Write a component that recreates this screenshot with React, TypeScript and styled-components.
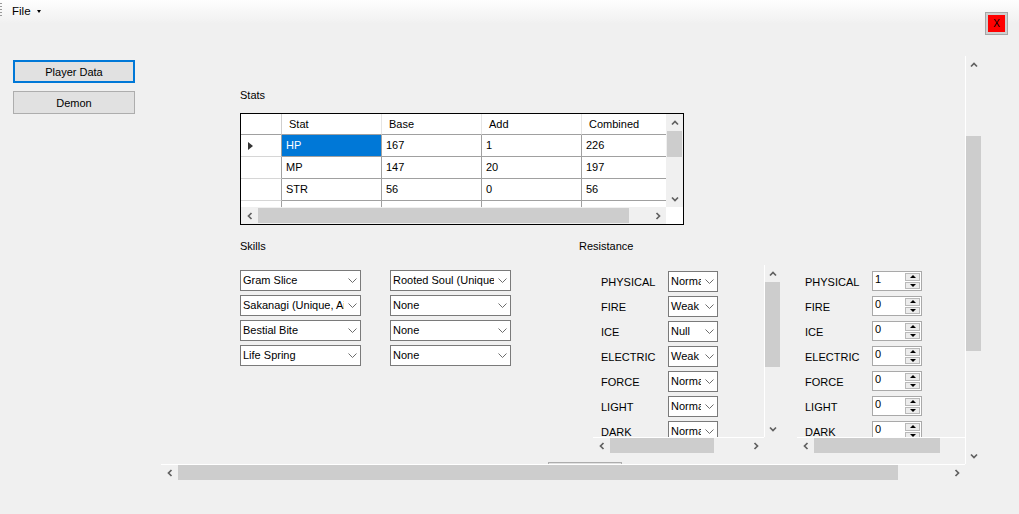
import styled, { createGlobalStyle } from "styled-components"

type Dir = 'up' | 'down' | 'left' | 'right'
type Thumb = { offset: number; size: number }

const stats = [
  { stat: 'HP', base: 167, add: 1, combined: 226 },
  { stat: 'MP', base: 147, add: 20, combined: 197 },
  { stat: 'STR', base: 56, add: 0, combined: 56 },
]

const skills = [
  'Gram Slice', 'Rooted Soul (Unique)',
  'Sakanagi (Unique, Ailment)', 'None',
  'Bestial Bite', 'None',
  'Life Spring', 'None',
]

const resistances = [
  { name: 'PHYSICAL', kind: 'Normal', value: 1 },
  { name: 'FIRE', kind: 'Weak', value: 0 },
  { name: 'ICE', kind: 'Null', value: 0 },
  { name: 'ELECTRIC', kind: 'Weak', value: 0 },
  { name: 'FORCE', kind: 'Normal', value: 0 },
  { name: 'LIGHT', kind: 'Normal', value: 0 },
  { name: 'DARK', kind: 'Normal', value: 0 },
]

const chevronPoints: Record<Dir, string> = {
  up: '1,5.5 4,2.5 7,5.5',
  down: '1,2.5 4,5.5 7,2.5',
  left: '5.5,1 2.5,4 5.5,7',
  right: '2.5,1 5.5,4 2.5,7',
}

const Chevron = ({ dir }: { dir: Dir }) => (
  <svg width="8" height="8" viewBox="0 0 8 8">
    <polyline points={chevronPoints[dir]} fill="none" stroke="#606060" strokeWidth="1.7" />
  </svg>
)

const DropArrow = () => (
  <svg width="9" height="5" viewBox="0 0 9 5">
    <polyline points="0.5,0.5 4.5,4.5 8.5,0.5" fill="none" stroke="#6d6d6d" strokeWidth="1" />
  </svg>
)

const ScrollPane = ({ width, height, v, h, edge, children }: {
  width: number, height: number, v: Thumb, h: Thumb, edge?: boolean, children: React.ReactNode
}) => (
  <Pane $w={width} $h={height}>
    <PaneView>{children}</PaneView>
    <VBar $edge={edge}>
      <VButton><Chevron dir="up" /></VButton>
      <VTrack $offset={v.offset}><VThumb $size={v.size} /></VTrack>
      <VButton><Chevron dir="down" /></VButton>
    </VBar>
    <HBar $edge={edge}>
      <HButton><Chevron dir="left" /></HButton>
      <HTrack $offset={h.offset}><HThumb $size={h.size} /></HTrack>
      <HButton><Chevron dir="right" /></HButton>
    </HBar>
    <div />
  </Pane>
)

const Combo = ({ value, width }: { value: string, width: number }) => (
  <ComboBox $w={width}>
    <ComboText>{value}</ComboText>
    <ComboButton><DropArrow /></ComboButton>
  </ComboBox>
)

const NumericUpDown = ({ value }: { value: number }) => (
  <Numeric>
    <NumericText>{value}</NumericText>
    <Spinner>
      <SpinButton><SpinTriangle $up /></SpinButton>
      <SpinButton><SpinTriangle /></SpinButton>
    </Spinner>
  </Numeric>
)

const App = () => {
  return (
    <Window>
      <GlobalStyle />
      <MenuStrip>
        <Grip />
        <MenuItem>File <Caret /></MenuItem>
        <CloseButton>X</CloseButton>
      </MenuStrip>

      <Body>
        <Sidebar>
          <NavButton $active>Player Data</NavButton>
          <NavButton>Demon</NavButton>
        </Sidebar>

        <MainFrame>
          <ScrollPane width={821} height={425} edge v={{ offset: 63, size: 215 }} h={{ offset: 0, size: 720 }}>
            <Content>
              <SectionLabel>Stats</SectionLabel>
              <GridBox>
                <ScrollPane width={442} height={110} v={{ offset: 0, size: 26 }} h={{ offset: 0, size: 371 }}>
                  <Table>
                    <Row $header>
                      <RowHead $header />
                      <HeadCell>Stat</HeadCell>
                      <HeadCell>Base</HeadCell>
                      <HeadCell>Add</HeadCell>
                      <HeadCell>Combined</HeadCell>
                    </Row>
                    {stats.map((s, i) => (
                      <Row key={s.stat}>
                        <RowHead>{i === 0 && <CurrentRow />}</RowHead>
                        <Cell $selected={i === 0}>{s.stat}</Cell>
                        <Cell>{s.base}</Cell>
                        <Cell>{s.add}</Cell>
                        <Cell>{s.combined}</Cell>
                      </Row>
                    ))}
                    <Row>
                      <RowHead />
                      <Cell />
                      <Cell />
                      <Cell />
                      <Cell />
                    </Row>
                  </Table>
                </ScrollPane>
              </GridBox>

              <LowerRow>
                <SkillsColumn>
                  <SectionLabel>Skills</SectionLabel>
                  <SkillGrid>
                    {skills.map((s, i) => <Combo key={i} value={s} width={121} />)}
                  </SkillGrid>
                </SkillsColumn>

                <div>
                  <SectionLabel>Resistance</SectionLabel>
                  <PanelRow>
                    <ScrollPane width={188} height={189} edge v={{ offset: 0, size: 85 }} h={{ offset: 0, size: 104 }}>
                      <ResistList>
                        {resistances.map(r => (
                          <ResistRow key={r.name}>
                            <ResistLabel>{r.name}</ResistLabel>
                            <Combo value={r.kind} width={50} />
                          </ResistRow>
                        ))}
                      </ResistList>
                    </ScrollPane>
                    <ScrollPane width={205} height={189} edge v={{ offset: 0, size: 85 }} h={{ offset: 0, size: 126 }}>
                      <ResistList>
                        {resistances.map(r => (
                          <ResistRow key={r.name}>
                            <ResistLabel>{r.name}</ResistLabel>
                            <NumericUpDown value={r.value} />
                          </ResistRow>
                        ))}
                      </ResistList>
                    </ScrollPane>
                  </PanelRow>
                </div>
              </LowerRow>

              <Footer>
                <PlainButton />
              </Footer>
            </Content>
          </ScrollPane>
        </MainFrame>
      </Body>
    </Window>
  )
}

const GlobalStyle = createGlobalStyle`
  * {
    box-sizing: border-box;
  }
  html, body {
    margin: 0;
    padding: 0;
  }
  body {
    background: #f0f0f0;
    font-family: "Liberation Sans", Arial, sans-serif;
    font-size: 11px;
    color: #000;
    overflow: hidden;
  }
`

const Window = styled.div`
  width: 1019px;
  height: 514px;
  display: flex;
  flex-direction: column;
  background: #f0f0f0;
`

const MenuStrip = styled.div`
  height: 24px;
  flex: none;
  display: flex;
  align-items: flex-start;
  background: linear-gradient(to bottom, #fefefe, #f0f0f0);
`

const Grip = styled.div`
  width: 2px;
  height: 15px;
  margin-top: 3px;
  background: repeating-linear-gradient(to bottom, #9a9a9a 0 1px, transparent 1px 3px);
`

const MenuItem = styled.div`
  height: 22px;
  margin-left: 10px;
  display: flex;
  align-items: center;
  gap: 6px;
  font-size: 11.5px;
`

const Caret = styled.span`
  width: 0;
  height: 0;
  border-top: 3px solid #000;
  border-left: 2.5px solid transparent;
  border-right: 2.5px solid transparent;
`

const CloseButton = styled.div`
  margin: 12px 11px 0 auto;
  width: 23px;
  height: 23px;
  border: 1px solid #a6a6a6;
  box-shadow: inset 0 0 0 2px #cfcfcf;
  background: #ff0000;
  display: flex;
  align-items: center;
  justify-content: center;
  font-size: 10px;
  color: #000;
`

const Body = styled.div`
  flex: 1;
  display: flex;
`

const Sidebar = styled.div`
  width: 161px;
  flex: none;
  padding: 36px 0 0 13px;
  display: flex;
  flex-direction: column;
  gap: 8px;
`

const NavButton = styled.div<{ $active?: boolean }>`
  width: 122px;
  height: 23px;
  display: flex;
  align-items: center;
  justify-content: center;
  background: #e1e1e1;
  border: ${p => (p.$active ? '2px solid #0078d7' : '1px solid #adadad')};
`

const MainFrame = styled.div`
  margin-top: 32px;
`

const Pane = styled.div<{ $w: number; $h: number }>`
  display: grid;
  grid-template-columns: ${p => p.$w - 17}px 17px;
  grid-template-rows: ${p => p.$h - 17}px 17px;
  width: ${p => p.$w}px;
  height: ${p => p.$h}px;
  flex: none;
`

const PaneView = styled.div`
  overflow: hidden;
  min-width: 0;
  min-height: 0;
`

const VBar = styled.div<{ $edge?: boolean }>`
  display: flex;
  flex-direction: column;
  background: #f0f0f0;
  border-left: 1px solid ${p => (p.$edge ? '#ffffff' : '#f0f0f0')};
`

const HBar = styled.div<{ $edge?: boolean }>`
  display: flex;
  background: #f0f0f0;
  border-top: 1px solid ${p => (p.$edge ? '#ffffff' : '#f0f0f0')};
`

const VButton = styled.div`
  flex: none;
  height: 17px;
  display: flex;
  align-items: center;
  justify-content: center;
`

const HButton = styled.div`
  flex: none;
  width: 17px;
  display: flex;
  align-items: center;
  justify-content: center;
`

const VTrack = styled.div<{ $offset: number }>`
  flex: 1;
  min-height: 0;
  padding-top: ${p => p.$offset}px;
`

const HTrack = styled.div<{ $offset: number }>`
  flex: 1;
  min-width: 0;
  padding-left: ${p => p.$offset}px;
  display: flex;
`

const VThumb = styled.div<{ $size: number }>`
  height: ${p => p.$size}px;
  margin-right: 1px;
  background: #cdcdcd;
`

const HThumb = styled.div<{ $size: number }>`
  width: ${p => p.$size}px;
  margin-bottom: 1px;
  background: #cdcdcd;
`

const Content = styled.div`
  width: max-content;
  padding: 33px 0 0 79px;
`

const SectionLabel = styled.div`
  line-height: 13px;
  height: 13px;
`

const GridBox = styled.div`
  margin-top: 11px;
  width: 444px;
  border: 1px solid #000;
  background: #fff;
`

const Table = styled.div`
  width: 441px;
  background: #fff;
`

const Row = styled.div<{ $header?: boolean }>`
  display: flex;
  height: ${p => (p.$header ? 21 : 22)}px;
`

const RowHead = styled.div<{ $header?: boolean }>`
  width: 41px;
  flex: none;
  display: flex;
  align-items: center;
  padding-left: 7px;
  border-right: 1px solid ${p => (p.$header ? '#cfcfcf' : '#a0a0a0')};
  border-bottom: 1px solid ${p => (p.$header ? '#a0a0a0' : '#d6d6d6')};
`

const CurrentRow = styled.span`
  width: 0;
  height: 0;
  border-left: 5px solid #333;
  border-top: 4px solid transparent;
  border-bottom: 4px solid transparent;
`

const HeadCell = styled.div`
  width: 100px;
  flex: none;
  padding-left: 7px;
  line-height: 21px;
  border-right: 1px solid #e5e5e5;
  border-bottom: 1px solid #a0a0a0;
`

const Cell = styled.div<{ $selected?: boolean }>`
  width: 100px;
  flex: none;
  padding-left: 4px;
  line-height: 21px;
  border-right: 1px solid #a0a0a0;
  border-bottom: 1px solid #a0a0a0;
  background: ${p => (p.$selected ? '#0078d7' : '#fff')};
  color: ${p => (p.$selected ? '#fff' : '#000')};
`

const LowerRow = styled.div`
  margin-top: 15px;
  display: flex;
`

const SkillsColumn = styled.div`
  width: 339px;
  flex: none;
`

const SkillGrid = styled.div`
  margin-top: 17px;
  display: grid;
  grid-template-columns: 121px 121px;
  column-gap: 29px;
  row-gap: 4px;
`

const ComboBox = styled.div<{ $w: number }>`
  width: ${p => p.$w}px;
  height: 21px;
  flex: none;
  display: flex;
  align-items: center;
  background: #fff;
  border: 1px solid #7a7a7a;
`

const ComboText = styled.span`
  flex: 1;
  min-width: 0;
  overflow: hidden;
  white-space: nowrap;
  padding: 0 0 2px 2px;
`

const ComboButton = styled.span`
  width: 16px;
  flex: none;
  display: flex;
  justify-content: center;
`

const PanelRow = styled.div`
  margin-top: 12px;
  padding-left: 14px;
  display: flex;
  gap: 16px;
`

const ResistList = styled.div`
  padding: 6px 0 0 8px;
  display: flex;
  flex-direction: column;
  gap: 4px;
`

const ResistRow = styled.div`
  display: grid;
  grid-template-columns: 67px auto;
  align-items: start;
  height: 21px;
`

const ResistLabel = styled.span`
  line-height: 21px;
  padding-top: 1px;
  white-space: nowrap;
`

const Numeric = styled.div`
  width: 50px;
  height: 20px;
  display: flex;
  background: #fff;
  border: 1px solid #a9a9a9;
`

const NumericText = styled.span`
  flex: 1;
  padding: 1px 0 0 2px;
  line-height: 13px;
`

const Spinner = styled.div`
  width: 16px;
  flex: none;
  display: flex;
  flex-direction: column;
  padding: 1px 1px 1px 0;
  gap: 1px;
`

const SpinButton = styled.div`
  flex: 1;
  display: flex;
  align-items: center;
  justify-content: center;
  background: #ececec;
  border: 1px solid #b9b9b9;
`

const SpinTriangle = styled.span<{ $up?: boolean }>`
  width: 0;
  height: 0;
  border-left: 3px solid transparent;
  border-right: 3px solid transparent;
  ${p => (p.$up ? 'border-bottom: 3px solid #000;' : 'border-top: 3px solid #000;')}
`

const Footer = styled.div`
  margin-top: 8px;
  padding-left: 308px;
`

const PlainButton = styled.div`
  width: 74px;
  height: 23px;
  background: #e1e1e1;
  border: 1px solid #adadad;
`

export default App
